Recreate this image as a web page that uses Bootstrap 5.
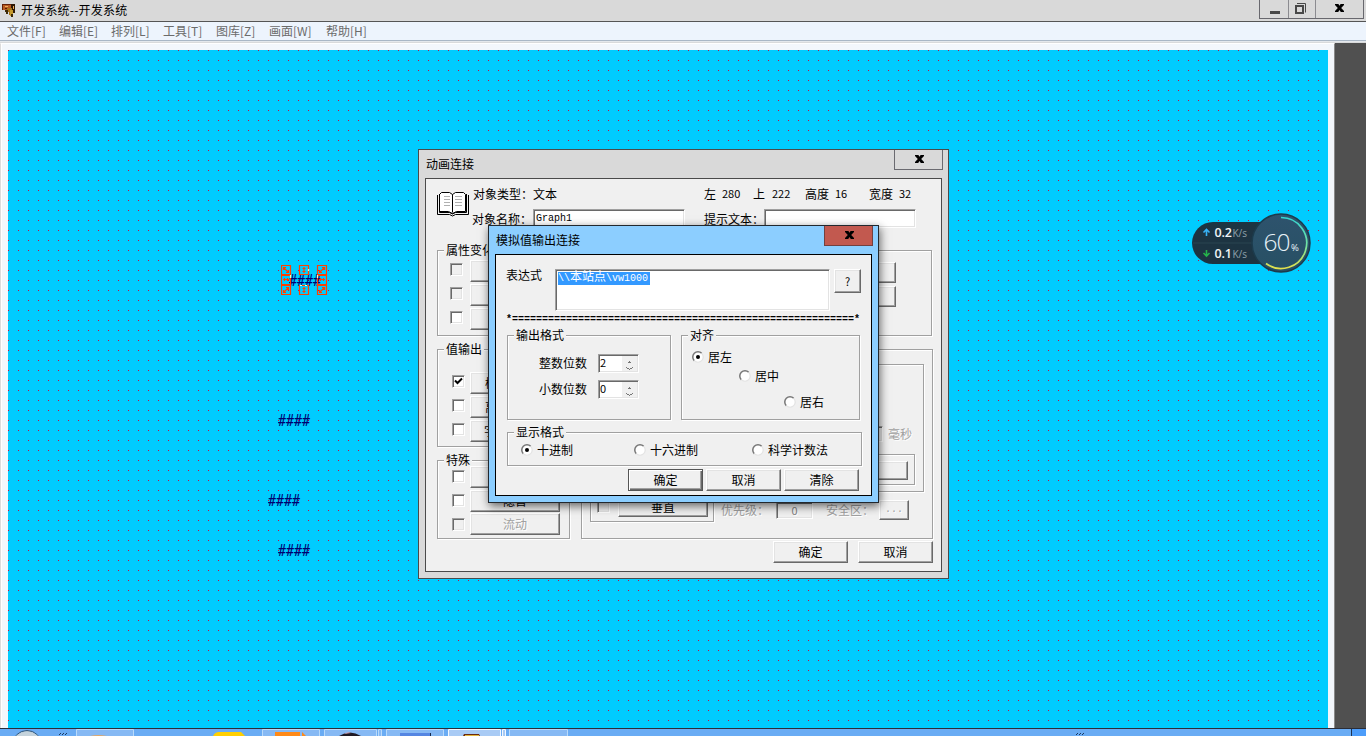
<!DOCTYPE html>
<html lang="zh-CN">
<head>
<meta charset="utf-8">
<title>开发系统--开发系统</title>
<link href="https://cdn.jsdelivr.net/npm/bootstrap@5.3.0/dist/css/bootstrap.min.css" rel="stylesheet">
<style>
*{box-sizing:border-box}
body{width:1366px;height:736px;overflow:hidden;font:12px/14px "Noto Sans CJK SC",sans-serif;color:#000;background:#eef4fb}
.titlebar{height:22px;background:#d9d9d9;border-bottom:1px solid #555;padding-left:1px}
.caption{margin-left:4px;line-height:20px;letter-spacing:.2px}
.winbtns{width:105px;height:19px;margin-right:2px;border:1px solid #68686e;border-top:0}
.winbtns>span+span{border-left:1px solid #8b8b90}
.menus{height:19px;background:#edf4fd;border-bottom:1px solid #a9b7c6;color:#6b6b6b;padding-left:7px;display:grid;grid-template-columns:52px 52px 52px 53px 53px 57px 60px;align-items:center;white-space:nowrap}
.frameline{height:2px;background:#e4e8ec;border-bottom:1px solid #d9dadb}
.work{height:685px}
.page-edge{width:1335px;background:#f3f7fc;border-left:1px solid #dcdcdc;border-right:1px solid #8a8a8a;border-top:1px solid #fff;box-shadow:inset 1px 0 #fff;padding:6px 6px 0 7px}
.canvas{height:678px;position:relative;background-color:#c8143c;background-image:linear-gradient(to bottom,transparent 1px,#00ccff 1px),linear-gradient(to right,transparent 1px,#00ccff 1px);background-size:10px 10px}
.darkside{background:#505050}
.hashes{position:absolute;font:13.3px/14px "DejaVu Sans Mono",monospace;color:#000070;transform:scaleY(1.15)}
.handles{position:absolute;left:273px;top:215px}
.win{position:absolute;background:#d9d9d9;border:1px solid #4a4a4a}
.win-head{height:28px;padding-left:7px;padding-right:5px}
.win-name{padding-top:7px}
.closer{width:49px;height:20px;border:1px solid #6a6a70;border-top:0}
.client{background:#f0f0f0;border:1px solid #4a4a4a;margin:0 6px}
#anim{left:418px;top:149px;width:531px;height:430px}
#anim .client{height:394px}
#analog{left:488px;top:225px;width:391px;height:278px;background:#8cceff;border-color:#22282e;box-shadow:1px 3px 9px rgba(0,0,0,.6)}
#analog .client{height:242px;border-color:#000}
#analog .closer{background:#c2594f;border-color:#73403f}
.gbox{border:1px solid #a0a0a0;box-shadow:1px 1px #fff,inset 1px 1px #fff}
.gname{display:block;width:max-content;height:14px;margin-top:-8px;margin-left:6px;padding:0 2px;background:#f0f0f0;line-height:14px}
.wbtn{display:flex;align-items:center;justify-content:center;width:75px;height:22px;background:#f0f0f0;border:1px solid;border-color:#fff #696969 #696969 #fff;box-shadow:inset -1px -1px #a0a0a0,inset 1px 1px #e3e3e3;flex:none;white-space:nowrap}
.wbtn.wide{width:90px}
.wbtn.main{border-color:#555;box-shadow:inset 1px 1px #fff,inset -1px -1px #696969,inset -2px -2px #a0a0a0}
.sunk{background:#fff;border:1px solid;border-color:#a0a0a0 #fff #fff #a0a0a0;box-shadow:inset 1px 1px #696969,inset -1px -1px #e3e3e3;flex:none}
.sunk.off{background:#f0f0f0}
.tick{width:13px;height:13px}
.faded{color:#a0a0a0;text-shadow:1px 1px #fff}
.num{font-size:11px}
.head-a .num{margin-top:-1px}
.mono{font-family:"Liberation Mono","Noto Sans CJK SC",monospace;font-size:10px}
.opt{display:flex;height:24px;padding-left:12px}
.opt .tick{margin:3px 7px 0 0}
.late .opt{padding-left:14px}
.late .opt .tick{margin-right:5px}
.late.special .opt .tick{margin-top:4px}
.left-set{width:133px}
.right-set{width:352px}
.head-a{display:grid;grid-template-columns:60px 171px 18px 31px 19px 33px 30px 34px 30px 30px;white-space:nowrap}
.radio-line{display:flex;align-items:center;height:14px;white-space:nowrap}
.radio-line svg{margin-right:4px;flex:none}
.rule{font:10px/12px "Liberation Mono",monospace;font-weight:bold;white-space:nowrap;width:354px;height:12px}
.picked{background:#3399ff;color:#fff;display:block;height:13px;line-height:14px;width:92px;white-space:nowrap}
.picked b{font-weight:400;font-size:12px;line-height:12px}
.spin{width:41px;height:19px}
.taskbar{height:8px;background:#6aacf4;border-top:1px solid #2a2d38;position:relative;overflow:hidden}
#meter{position:absolute;left:1187px;top:208px}
svg{display:block}
</style>
</head>
<body class="d-flex flex-column position-relative">
<svg width="0" height="0" class="position-absolute">
 <defs>
  <g id="ex"><path d="M0 0h3.400l1.100 1.800L5.600 0H9v1L6.200 4 9 7v1H5.800L4.500 6 3.200 8H0V7l2.800-3L0 1z"/></g>
  <g id="ro"><circle cx="6" cy="6" r="5" fill="#fff"/><path d="M2.300 9.700A5.200 5.200 0 0 1 9.700 2.300" fill="none" stroke="#777" stroke-width="1.500"/><path d="M2.300 9.700A5.200 5.200 0 0 0 9.700 2.300" fill="none" stroke="#e3e3e3" stroke-width="1.200"/></g>
 </defs>
</svg>

<header class="titlebar d-flex align-items-start flex-shrink-0">
 <svg width="16" height="20" viewBox="0 0 16 20" shape-rendering="crispEdges"><path d="M1 4h13v2H1zM1 6h2v4H1z" fill="#642006"/><path d="M2 5h8v5H2z" fill="#b85a20"/><path d="M10 4h4v9h-3v-3h-1z" fill="#2c1704"/><path d="M6 8h5v7H8v-3H6z" fill="#a67418"/><path d="M9 10h3v6H9z" fill="#c59a2c"/><path d="M4 10h3v4H5v-2H4zM10 14h2v3h-2z" fill="#3c2806"/><path d="M4 6h3v1H4zM12 6h1v3h-1z" fill="#f0b060"/><path d="M4 8h2v1H4z" fill="#5a1b06"/></svg>
 <span class="caption">开发系统--开发系统</span>
 <div class="winbtns d-flex ms-auto">
  <span style="width:28px"><svg width="28" height="18"><path d="M10 11h10v3H10z" fill="#484848"/></svg></span>
  <span style="width:27px"><svg width="26" height="18"><path d="M8 3.500h8.500v9" fill="none" stroke="#484848"/><path d="M7 6h7v7H7z" fill="none" stroke="#484848" stroke-width="2"/></svg></span>
  <span class="flex-fill"><svg width="47" height="18"><use href="#ex" x="19" y="4"/></svg></span>
 </div>
</header>
<nav class="menus flex-shrink-0"><span>文件[F]</span><span>编辑[E]</span><span>排列[L]</span><span>工具[T]</span><span>图库[Z]</span><span>画面[W]</span><span>帮助[H]</span></nav>
<div class="frameline flex-shrink-0"></div>

<main class="work d-flex flex-shrink-0">
 <div class="page-edge">
  <div class="canvas">
   <span class="hashes" style="left:281px;top:224px">####</span>
   <span class="hashes" style="left:270px;top:364px">####</span>
   <span class="hashes" style="left:260px;top:444px">####</span>
   <span class="hashes" style="left:270px;top:494px">####</span>
   <svg class="handles" width="47" height="31" fill="none" stroke="#ff4000" stroke-width="1.200">
    <path d="M.5.5h9v9h-9zM18.500.5h9v9h-9zM36.500.5h9v9h-9zM.5 10.500h9v9h-9zM36.500 10.500h9v9h-9zM.5 20.500h9v9h-9zM18.500 20.500h9v9h-9zM36.500 20.500h9v9h-9z"/>
    <path d="M2.500 5v-2.500h2.500M2.500 2.500l5 5M7.500 5v2.500H5M23 2v6M21.500 3.500h3M21.500 6.500h3M43.500 5V2.500H41M43.500 2.500l-5 5M38.500 5v2.500H41M2 14.500h6M3.500 13v3M6.500 13v3M38 14.500h6M39.500 13v3M42.500 13v3M7.500 25v-2.500H5M7.500 22.500l-5 5M2.500 25v2.500H5M23 22v6M21.500 23.500h3M21.500 26.500h3M43.500 25v-2.500H41M43.500 22.500l-5 5M38.500 25v2.500H41"/>
    <path d="M9.500 10v3M36.500 10v3M27.500 4v2M19 20.500h2M24 20.500h2" stroke="#fff4bf"/>
   </svg>
  </div>
 </div>
 <aside class="darkside flex-fill"></aside>
</main>

<footer class="taskbar flex-shrink-0">
 <svg width="1366" height="7" viewBox="0 729 1366 7">
  <circle cx="27" cy="745" r="14.500" fill="#a9bfce" stroke="#2c557e"/>
  <path d="M16 736q11-9 22 0" fill="#c5d3dc"/>
  <path d="M59 734h1v1h-1zM62 734h1v1h-1zM65 734h1v1h-1zM60 733h1v1h-1zM63 733h1v1h-1zM66 733h1v1h-1zM1076 734h1v1h-1zM1079 734h1v1h-1zM1082 734h1v1h-1zM1077 733h1v1h-1zM1080 733h1v1h-1zM1083 733h1v1h-1z" fill="#1c3a60"/>
  <g fill="#86b9f4" stroke="#b9dafa"><path d="M76.500 740v-10.500h57V740zM262.500 740v-10.500h57V740zM324.500 740v-10.500h52V740zM378.500 740v-10.500h3V740zM386.500 740v-10.500h57V740zM509.500 740v-10.500h58V740z"/><path d="M448.500 740v-10.500h52V740zM502.500 740v-10.500h3V740z" fill="#a9cbf5" stroke="#f4f9ff"/></g>
  <path d="M90 736q8-2 17 0z" fill="#e3a766"/>
  <path d="M213 736q2-4 6-4h22l4 4z" fill="#ffcf02"/>
  <path d="M275 732h25v4h-25zM302 732l4 4h-4z" fill="#ff8a18"/>
  <path d="M339 736q11-7 22 0z" fill="#201923"/><path d="M344 734q4-3 7-1z" fill="#d9a4b4"/>
  <path d="M400 733h31v3h-31z" fill="#5586e2"/><path d="M430 733h1v3h-1z" fill="#14284f"/>
  <path d="M464 734h15l1 2h-17z" fill="#6a2a10"/><path d="M465 735h14v1h-14z" fill="#e3b63c"/>
  <path d="M1352 729h14v7h-14z" fill="#4d9dfa"/><path d="M1351 729h1v7h-1z" fill="#1f334f"/>
 </svg>
</footer>

<section class="win" id="anim">
 <div class="win-head d-flex justify-content-between"><span class="win-name">动画连接</span><span class="closer"><svg width="47" height="19"><use href="#ex" x="20" y="5"/></svg></span></div>
 <div class="client">
  <div class="d-flex" style="height:71px;padding:8px 0 0 11px">
   <svg width="32" height="26" viewBox="0 0 32 26" style="margin-top:4px" fill="none" stroke="#000"><path d="M4.500 1.500h8l3 2 3-2h8l2 2v17h-9l-4 2-4-2h-9v-17z" fill="#fff"/><path d="M.5 4v19.500h12l3 1.500 3-1.500h13V4M2.500 3v18.500h10l3 1.500 3-1.500h11V3M15.500 3.500v18"/><path d="M7 5.500h6M7 8.500h6M7 11.500h6M7 14.500h6M18 5.500h7M18 8.500h7M18 11.500h7M18 14.500h7" stroke="#b0b0b0"/></svg>
   <div style="margin-left:4px">
    <div class="head-a"><span>对象类型：</span><span>文本</span><span>左</span><span class="num">280</span><span>上</span><span class="num">222</span><span>高度</span><span class="num">16</span><span>宽度</span><span class="num">32</span></div>
    <div class="d-flex align-items-center" style="margin-top:8px"><span style="width:60px;margin-left:-1px">对象名称：</span><div class="sunk mono" style="width:152px;height:19px;padding:2px;margin-left:1px">Graph1</div><span style="width:60px;margin-left:19px">提示文本：</span><div class="sunk" style="width:152px;height:19px"></div></div>
   </div>
  </div>
  <div class="d-flex" style="padding:0 9px 0 11px;gap:11px">
   <div class="left-set d-flex flex-column" style="gap:13px">
    <div class="gbox" style="height:86px"><span class="gname" style="margin-bottom:3px">属性变化</span>
     <div class="opt"><i class="tick sunk off"></i><span class="wbtn wide"></span></div><div class="opt"><i class="tick sunk off"></i><span class="wbtn wide"></span></div><div class="opt"><i class="tick sunk"></i><span class="wbtn wide"></span></div></div>
    <div class="gbox late" style="height:98px"><span class="gname" style="margin-bottom:16px">值输出</span>
     <div class="opt"><i class="tick sunk"><svg width="11" height="11"><path d="M2 4.500l2.500 2.500L9 2.500" fill="none" stroke="#000" stroke-width="2"/></svg></i><span class="wbtn wide">模拟值输出</span></div><div class="opt"><i class="tick sunk"></i><span class="wbtn wide">离散值输出</span></div><div class="opt"><i class="tick sunk"></i><span class="wbtn wide justify-content-start" style="padding-left:13px">字符</span></div></div>
    <div class="gbox late special" style="height:79px"><span class="gname" style="margin-bottom:-1px">特殊</span>
     <div class="opt"><i class="tick sunk"></i><span class="wbtn wide">闪烁</span></div><div class="opt"><i class="tick sunk"></i><span class="wbtn wide">隐含</span></div><div class="opt" style="margin-top:-1px"><i class="tick sunk off" style="margin-top:5px"></i><span class="wbtn wide faded">流动</span></div></div>
   </div>
   <div class="right-set d-flex flex-column" style="gap:13px;margin-right:-1px">
    <div class="gbox d-flex flex-column align-items-end" style="height:86px;width:351px;padding:11px 35px 0 0;gap:3px"><span class="wbtn wide" style="height:21px"></span><span class="wbtn wide" style="height:21px"></span></div>
    <div class="gbox d-flex" style="height:190px;padding:14px 0 0 8px">
     <div class="gbox d-flex align-items-end" style="width:124px;height:158px;padding:0 5px 4px 6px"><i class="tick sunk off" style="margin-bottom:4px"></i><span class="wbtn flex-fill" style="margin-left:8px;height:20px">垂直</span></div>
     <div style="width:203px;margin-left:7px">
      <div class="gbox d-flex flex-column align-items-end" style="height:128px;padding-top:61px">
       <div class="d-flex faded align-items-center" style="margin-right:11px"><i class="sunk off" style="width:60px;height:16px;margin-right:5px"></i>毫秒</div>
       <div class="gbox d-flex justify-content-end" style="width:180px;height:31px;margin:12px 8px 0 0;padding:6px 6px 0 0"><span class="wbtn" style="height:19px"></span></div>
      </div>
      <div class="faded d-flex align-items-center" style="height:20px;margin-top:8px"><span style="width:55px">优先级：</span><span class="sunk off num text-center" style="width:37px;height:17px;line-height:15px;color:#808080">0</span><span style="width:53px;margin-left:13px">安全区：</span><span class="wbtn mono" style="width:30px;height:20px">...</span></div>
     </div>
    </div>
   </div>
  </div>
  <div class="d-flex justify-content-end" style="gap:10px;padding:2px 8px 0 0"><span class="wbtn">确定</span><span class="wbtn">取消</span></div>
 </div>
</section>

<section class="win" id="analog">
 <div class="win-head d-flex justify-content-between"><span class="win-name">模拟值输出连接</span><span class="closer"><svg width="47" height="19"><use href="#ex" x="20" y="5"/></svg></span></div>
 <div class="client" style="padding-left:11px">
  <div class="d-flex" style="padding-top:14px"><span style="width:49px;margin:-1px 0 0 -1px">表达式</span><div class="sunk mono" style="width:275px;height:42px;padding:2px"><span class="picked">\\<b>本站点</b>\vw1000</span></div><span class="wbtn num" style="width:27px;height:24px;margin-left:4px">?</span></div>
  <div class="rule" style="margin:3px 0 0 -1px">*=========================================================*</div>
  <div class="d-flex" style="margin-top:9px;gap:10px">
   <div class="gbox" style="width:164px;height:85px"><span class="gname">输出格式</span>
    <div class="d-flex align-items-center" style="margin:12px 0 0 31px"><span style="width:59px;margin-top:-1px">整数位数</span><div class="sunk spin d-flex justify-content-between"><span class="num" style="padding:0 1px">2</span><svg width="16" height="17"><path d="M0 1h15v15H0z" fill="#f0f0f0"/><path d="M6 7.500h3M7 6.500h1M4.500 12v1M5 13.500h2M8 14.500H7M8 13.500h2M10.500 12v1" fill="none" stroke="#777"/></svg></div></div>
    <div class="d-flex align-items-center" style="margin:7px 0 0 31px"><span style="width:59px;margin-top:-1px">小数位数</span><div class="sunk spin d-flex justify-content-between"><span class="num" style="padding:0 1px">0</span><svg width="16" height="17"><path d="M0 1h15v15H0z" fill="#f0f0f0"/><path d="M6 7.500h3M7 6.500h1M4.500 12v1M5 13.500h2M8 14.500H7M8 13.500h2M10.500 12v1" fill="none" stroke="#777"/></svg></div></div>
   </div>
   <div class="gbox" style="width:179px;height:85px"><span class="gname">对齐</span>
    <div class="radio-line" style="margin:8px 0 0 10px"><svg width="12" height="12"><use href="#ro"/><circle cx="6" cy="6" r="2"/></svg>居左</div>
    <div class="radio-line" style="margin:5px 0 0 57px"><svg width="12" height="12"><use href="#ro"/></svg>居中</div>
    <div class="radio-line" style="margin:12px 0 0 102px"><svg width="12" height="12"><use href="#ro"/></svg>居右</div>
   </div>
  </div>
  <div class="gbox" style="width:355px;height:34px;margin-top:12px"><span class="gname">显示格式</span>
   <div class="d-flex" style="margin:4px 0 0 13px"><span class="radio-line" style="width:113px"><svg width="12" height="12"><use href="#ro"/><circle cx="6" cy="6" r="2"/></svg>十进制</span><span class="radio-line" style="width:118px"><svg width="12" height="12"><use href="#ro"/></svg>十六进制</span><span class="radio-line"><svg width="12" height="12"><use href="#ro"/></svg>科学计数法</span></div>
  </div>
  <div class="d-flex" style="gap:3px;margin:3px 0 0 121px"><span class="wbtn main">确定</span><span class="wbtn">取消</span><span class="wbtn">清除</span></div>
 </div>
</section>

<svg id="meter" width="128" height="72" viewBox="1188 208 128 72">
 <defs><linearGradient id="arc" x1="0" y1="0" x2="0" y2="1"><stop offset="0" stop-color="#35d6d2"/><stop offset=".55" stop-color="#72e3a2"/><stop offset="1" stop-color="#e2e04c"/></linearGradient><linearGradient id="disc" x1="0" y1="0" x2="0" y2="1"><stop offset="0" stop-color="#2e536d"/><stop offset="1" stop-color="#275064"/></linearGradient></defs>
 <path d="M1214 222h60v42h-60a21 21 0 0 1 0-42z" fill="#1d3442"/>
 <path d="M1194 243h62" stroke="#2a4450"/>
 <circle cx="1282" cy="243" r="29" fill="url(#disc)" stroke="#1c3b4c" stroke-width="1.500"/>
 <path d="M1282 217.500a25.500 25.500 0 1 1-15 46" fill="none" stroke="url(#arc)" stroke-width="1.700"/>
 <path d="M1207.500 236v-6M1204.500 232.500l3-3 3 3" fill="none" stroke="#38b2f6" stroke-width="1.600"/>
 <path d="M1207.500 250v6M1204.500 253l3 3 3-3" fill="none" stroke="#25b34b" stroke-width="1.600"/>
 <g font-family="Open Sans, sans-serif"><g font-size="12.500" font-weight="600" fill="#f2f6f8"><text x="1215.500" y="237" textLength="17.500">0.2</text><text x="1215.500" y="258" textLength="17.500">0.1</text></g>
 <g font-size="10" fill="#8fa1ab"><text x="1233.500" y="237" textLength="14.500">K/s</text><text x="1233.500" y="258" textLength="14.500">K/s</text></g>
 <text x="1264.500" y="251" font-size="24.500" font-weight="300" fill="#e8f3f8" textLength="27">60</text><text x="1292" y="251" font-size="9.500" fill="#e8f3f8">%</text></g>
</svg>
<script src="https://cdn.jsdelivr.net/npm/bootstrap@5.3.0/dist/js/bootstrap.bundle.min.js"></script>
</body>
</html>
